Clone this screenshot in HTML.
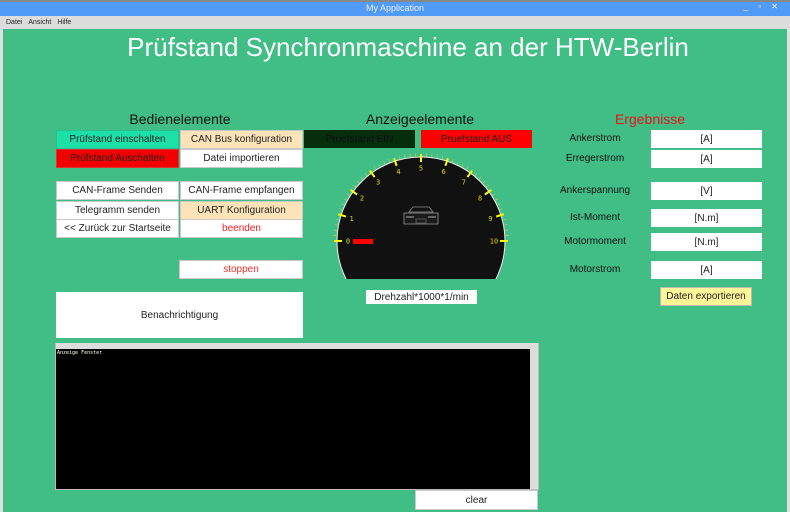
<!DOCTYPE html>
<html><head><meta charset="utf-8"><style>
*{margin:0;padding:0;box-sizing:border-box}
body{width:790px;height:512px;overflow:hidden;background:#e0e0e0;font-family:"Liberation Sans",sans-serif;position:relative}
.a{position:absolute}
#tb{left:0;top:0;width:790px;height:16px;background:#4f9bf6;color:#eef;font-size:9px;text-align:center;line-height:16px}
#tb2{left:0;top:0;width:790px;height:2px;background:#888}
#mb{left:0;top:16px;width:790px;height:13px;background:#dcdcdc;font-size:7px;line-height:13px;color:#222}
#g{left:3px;top:29px;width:784px;height:483px;background:#41bd86}
.b{position:absolute;background:#fff;border:1px solid #c8c8c8;font-size:10px;text-align:center;color:#222;display:flex;align-items:center;justify-content:center}
.h{position:absolute;font-size:14px;color:#111;text-align:center}
.l{position:absolute;font-size:10px;color:#111;text-align:center;width:100px}
</style></head><body>
<div class="a" id="tb">My Application</div>
<div class="a" id="tb2"></div>
<div class="a" style="right:8px;top:2px;color:#fff;font-size:8px;letter-spacing:4px">_ ▫ ✕</div>
<div class="a" id="mb"><span style="margin-left:6px">Datei</span><span style="margin-left:6px">Ansicht</span><span style="margin-left:6px">Hilfe</span></div>
<div class="a" id="g"></div>
<div class="a" style="left:0;top:31px;text-align:center;padding-left:26px;font-size:26px;color:#fff;line-height:32px;width:790px">Prüfstand Synchronmaschine an der HTW-Berlin</div>

<div class="h" style="left:100px;top:111px;width:160px">Bedienelemente</div>
<div class="h" style="left:340px;top:111px;width:160px">Anzeigeelemente</div>
<div class="h" style="left:570px;top:111px;width:160px;color:#e8141a">Ergebnisse</div>

<div class="b" style="left:56px;top:130px;width:123px;height:19px;background:#1be0a8;border-color:#2bbf90">Prüfstand einschalten</div>
<div class="b" style="left:180px;top:130px;width:123px;height:19px;background:#fde3b7">CAN Bus konfiguration</div>
<div class="b" style="left:56px;top:149px;width:123px;height:19px;background:#f20000;border-color:#d33">Prüfstand Auschalten</div>
<div class="b" style="left:180px;top:149px;width:123px;height:19px">Datei importieren</div>
<div class="b" style="left:56px;top:181px;width:123px;height:19px">CAN-Frame Senden</div>
<div class="b" style="left:180px;top:181px;width:123px;height:19px">CAN-Frame empfangen</div>
<div class="b" style="left:56px;top:201px;width:123px;height:19px">Telegramm senden</div>
<div class="b" style="left:180px;top:201px;width:123px;height:19px;background:#fde3b7">UART Konfiguration</div>
<div class="b" style="left:56px;top:219px;width:123px;height:19px">&lt;&lt; Zurück zur Startseite</div>
<div class="b" style="left:180px;top:219px;width:123px;height:19px;color:#f02020">beenden</div>
<div class="b" style="left:179px;top:260px;width:124px;height:19px;color:#f03030">stoppen</div>
<div class="b" style="left:56px;top:292px;width:247px;height:46px;border:none">Benachrichtigung</div>

<div class="b" style="left:304px;top:130px;width:111px;height:18px;background:#062e0c;border:none;color:#111">Pruefstand EIN</div>
<div class="b" style="left:421px;top:130px;width:111px;height:18px;background:#ff0000;border:none;color:#222">Pruefstand AUS</div>

<svg class="a" style="left:330px;top:150px" width="180" height="135" id="gs">
<defs><clipPath id="cp"><rect x="0" y="0" width="180" height="129"/></clipPath></defs>
<circle cx="91" cy="91" r="84" fill="#111" stroke="#eee" stroke-width="1" clip-path="url(#cp)"/>
<rect x="23" y="89" width="20" height="5" fill="#f00"/>
<g transform="translate(73,56)" fill="none" stroke="#aaa" stroke-width="0.8">
<path d="M6 6 L10 1 H26 L30 6 Z" stroke="#888"/>
<path d="M1 7 H35 V18 H1 Z" fill="#1a1a1a" stroke="#999"/>
<path d="M3 11 H11 M25 11 H33" stroke="#ddd"/>
<path d="M13 13 H23 V17 H13 Z" stroke="#666"/>
</g>
<g id="tk"></g>
</svg>
<div class="b" style="left:366px;top:290px;width:111px;height:14px;border:none">Drehzahl*1000*1/min</div>

<div class="l" style="left:545px;top:133px">Ankerstrom</div>
<div class="l" style="left:545px;top:153px">Erregerstrom</div>
<div class="l" style="left:545px;top:185px">Ankerspannung</div>
<div class="l" style="left:545px;top:212px">Ist-Moment</div>
<div class="l" style="left:545px;top:236px">Motormoment</div>
<div class="l" style="left:545px;top:264px">Motorstrom</div>
<div class="b" style="left:651px;top:130px;width:111px;height:18px;border:none">[A]</div>
<div class="b" style="left:651px;top:150px;width:111px;height:18px;border:none">[A]</div>
<div class="b" style="left:651px;top:182px;width:111px;height:18px;border:none">[V]</div>
<div class="b" style="left:651px;top:209px;width:111px;height:18px;border:none">[N.m]</div>
<div class="b" style="left:651px;top:233px;width:111px;height:18px;border:none">[N.m]</div>
<div class="b" style="left:651px;top:261px;width:111px;height:18px;border:none">[A]</div>
<div class="b" style="left:660px;top:287px;width:92px;height:19px;background:#fdf59a;border:1px solid #bba">Daten exportieren</div>

<div class="a" style="left:55px;top:343px;width:484px;height:147px;background:#000;border:1px solid #bbb"></div>
<div class="a" style="left:56px;top:343px;width:482px;height:6px;background:#ddd"></div>
<div class="a" style="left:530px;top:349px;width:8px;height:140px;background:#ddd"></div>
<div class="a" style="left:57px;top:350px;font-family:'DejaVu Sans Mono',monospace;font-size:5px;color:#ffd">Anzeige Fenster</div>
<div class="b" style="left:415px;top:490px;width:123px;height:20px">clear</div>

<script>
var g=document.getElementById('tk'),s='',cx=91,cy=91;
for(var i=0;i<=50;i++){var a=Math.PI-i*Math.PI/50,c=Math.cos(a),n=Math.sin(a);
if(i%5==0){s+='<line x1="'+(cx+c*79)+'" y1="'+(cy-n*79)+'" x2="'+(cx+c*87)+'" y2="'+(cy-n*87)+'" stroke="#ff0" stroke-width="2"/>';
s+='<text x="'+(cx+c*73)+'" y="'+(cy-n*73+2.5)+'" fill="#dd0" font-size="7" text-anchor="middle" font-family="DejaVu Sans Mono">'+(i/5)+'</text>';}
else s+='<line x1="'+(cx+c*84)+'" y1="'+(cy-n*84)+'" x2="'+(cx+c*88)+'" y2="'+(cy-n*88)+'" stroke="#cc6" stroke-width="0.6"/>';}
g.innerHTML=s;
</script>
</body></html>
